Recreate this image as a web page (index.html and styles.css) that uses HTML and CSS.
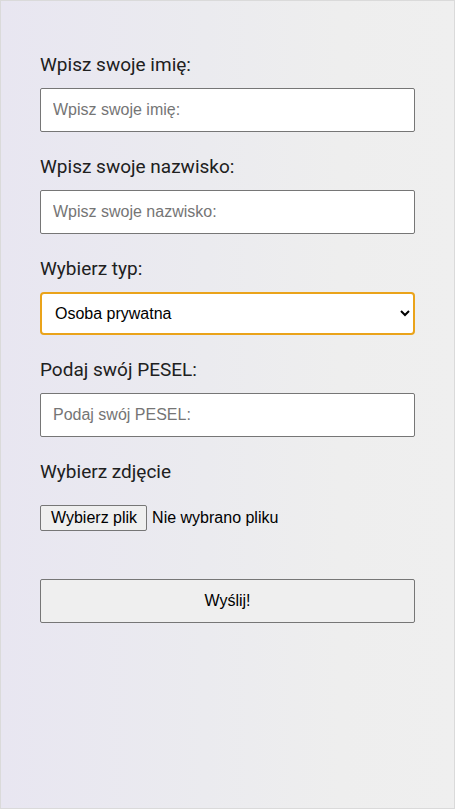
FILE: index.html
```html
<!DOCTYPE html>
<html lang="pl">
<head>
<meta charset="utf-8">
<title>Formularz</title>
<link rel="stylesheet" href="styles.css">
</head>
<body>
<div class="page">
  <form class="form">
    <div class="field">
      <label class="label" for="imie">Wpisz swoje imię:</label>
      <input class="input" id="imie" type="text" placeholder="Wpisz swoje imię:">
    </div>
    <div class="field">
      <label class="label" for="nazwisko">Wpisz swoje nazwisko:</label>
      <input class="input" id="nazwisko" type="text" placeholder="Wpisz swoje nazwisko:">
    </div>
    <div class="field">
      <label class="label" for="typ">Wybierz typ:</label>
      <select class="select" id="typ">
        <option>Osoba prywatna</option>
        <option>Firma</option>
      </select>
    </div>
    <div class="field">
      <label class="label" for="pesel">Podaj swój PESEL:</label>
      <input class="input" id="pesel" type="text" placeholder="Podaj swój PESEL:">
    </div>
    <div class="field field-file">
      <span class="label">Wybierz zdjęcie</span>
      <div class="file-row">
        <label class="file-btn" for="zdjecie">Wybierz plik</label>
        <span class="file-name">Nie wybrano pliku</span>
        <input class="file-input" id="zdjecie" type="file">
      </div>
    </div>
    <button class="submit" type="submit">Wyślij!</button>
  </form>
</div>
</body>
</html>
```
FILE: styles.css
```css
* { box-sizing: border-box; }
html, body { margin: 0; padding: 0; }
body { font-family: Roboto, "Liberation Sans", Arial, sans-serif; }

.page {
  min-height: 100vh;
  border: 1px solid #dadada;
  background: linear-gradient(to right, #e8e6f1 0%, #ebebef 45%, #eeeeee 75%, #efefef 100%);
  padding: 53px 39px 40px 39px;
}

.form {
  display: flex;
  flex-direction: column;
  gap: 24px;
  width: 375px;
}

.field {
  display: flex;
  flex-direction: column;
  gap: 13px;
}

.label {
  font-family: Roboto, "Liberation Sans", sans-serif;
  font-size: 19px;
  color: #202020;
  line-height: 21px;
}

.input {
  height: 44px;
  width: 100%;
  border: 1px solid #767676;
  border-radius: 2px;
  background: #fff;
  padding: 0 12px;
  font-family: "Liberation Sans", Arial, sans-serif;
  font-size: 16px;
  color: #000;
}
.input::placeholder { color: #757575; }

.select {
  height: 43px;
  width: 100%;
  border: 2px solid #eaa31a;
  border-radius: 4px;
  background: #fff;
  padding: 0 9px;
  font-family: "Liberation Sans", Arial, sans-serif;
  font-size: 16px;
  color: #000;
  outline: none;
}

.field-file { gap: 23px; }

.file-row {
  display: flex;
  align-items: center;
  gap: 5px;
  height: 26px;
  font-family: "Liberation Sans", Arial, sans-serif;
  font-size: 16px;
  color: #000;
}

.file-btn {
  display: inline-flex;
  align-items: center;
  height: 26px;
  padding: 0 9px 0 10px;
  border: 1px solid #767676;
  border-radius: 2px;
  background: #efefef;
  color: #000;
  cursor: pointer;
}

.file-name { color: #000; }

.file-input {
  display: none;
}

.submit {
  margin-top: 24px;
  height: 44px;
  width: 100%;
  border: 1px solid #767676;
  border-radius: 2px;
  background: #efefef;
  font-family: "Liberation Sans", Arial, sans-serif;
  font-size: 16px;
  color: #000;
}
```
